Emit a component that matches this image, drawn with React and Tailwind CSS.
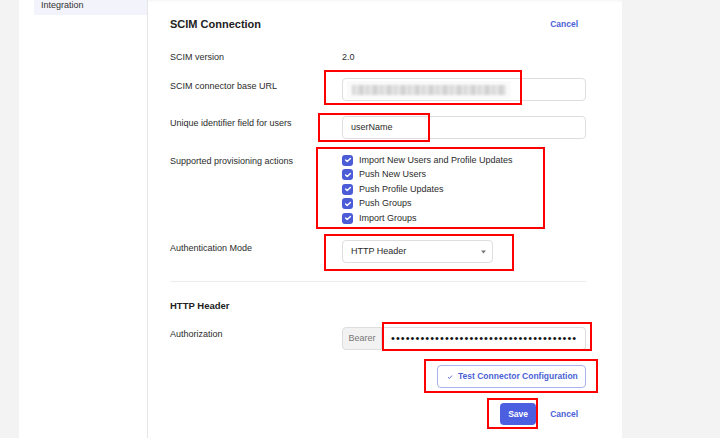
import React from 'react';

const actions = [
  'Import New Users and Profile Updates',
  'Push New Users',
  'Push Profile Updates',
  'Push Groups',
  'Import Groups',
];

const Mark = ({ className }) => (
  <div className={'pointer-events-none absolute border-2 border-[#ff0000] ' + className} />
);

const CheckBox = () => (
  <span className="flex h-[11px] w-[11px] items-center justify-center rounded-[3px] bg-[#4b5cd6]">
    <svg width="8" height="8" viewBox="0 0 8 8">
      <path d="M1.6 4.1 L3.2 5.6 L6.4 2.4" fill="none" stroke="white" strokeWidth="1.4" strokeLinecap="round" strokeLinejoin="round" />
    </svg>
  </span>
);

const App = () => {
  return (
    <div className="flex h-[438px] w-[720px] overflow-hidden bg-[#f3f3f3] font-['Liberation_Sans',Arial,sans-serif] text-[9px] text-[#2b2b2b]">
      <div className="w-[19px]" />

      {/* sidebar */}
      <div className="w-[129px] border-r border-[#e6e6e6] bg-white pl-[15px]">
        <div className="h-[15px] bg-[#f3f3fb] pl-[7px] text-[9px] leading-[10px] text-[#333]">Integration</div>
      </div>

      {/* main */}
      <div className="w-[474px] bg-white pl-[22px] pr-[36px] shadow-[inset_0_3px_3px_-2px_rgba(0,0,0,0.05)]">
        <div className="flex h-[48px] items-center justify-between">
          <h1 className="text-[11px] font-bold text-[#222]">SCIM Connection</h1>
          <button className="px-[8px] text-[8.5px] font-bold text-[#4b5fd6]">Cancel</button>
        </div>

        <div className="grid h-[20px] grid-cols-[172px_1fr] items-center">
          <div>SCIM version</div>
          <div>2.0</div>
        </div>

        <div className="mt-[10px] grid grid-cols-[172px_1fr]">
          <div className="pt-[1px] leading-[14px]">SCIM connector base URL</div>
          <div className="relative">
            <div className="flex h-[23px] items-center rounded-[4px] border border-[#dedede] pl-[4px]">
              <div className="flex h-[18px] w-[164px] items-center bg-[#fafafa] px-[5px]">
                <div className="h-[10px] w-[154px] bg-[repeating-linear-gradient(90deg,#d4d4d4_0px,#e8e8e8_5px,#cdcdcd_9px,#ebebeb_14px)] blur-[1px]" />
              </div>
            </div>
            <Mark className="-left-[18px] -top-[8px] h-[35px] w-[198px]" />
          </div>
        </div>

        <div className="mt-[15px] grid grid-cols-[172px_1fr]">
          <div className="leading-[14px]">Unique identifier field for users</div>
          <div className="relative">
            <div className="flex h-[23px] items-center rounded-[4px] border border-[#dedede] px-[8px]">userName</div>
            <Mark className="-left-[24px] -top-[3px] h-[29px] w-[112px]" />
          </div>
        </div>

        <div className="mt-[14px] grid grid-cols-[172px_1fr]">
          <div className="pt-[1px] leading-[14px]">Supported provisioning actions</div>
          <div className="relative">
            {actions.map((a) => (
              <div key={a} className="flex h-[14.5px] items-center gap-[6px]">
                <CheckBox />
                <span>{a}</span>
              </div>
            ))}
            <Mark className="-left-[26px] -top-[6px] h-[82px] w-[229px]" />
          </div>
        </div>

        <div className="mt-[14.5px] grid grid-cols-[172px_1fr]">
          <div className="pt-[1px] leading-[14px]">Authentication Mode</div>
          <div className="relative">
            <div className="flex h-[23px] w-[151px] items-center justify-between rounded-[4px] border border-[#dedede] pl-[8px] pr-[6px]">
              <span>HTTP Header</span>
              <svg width="5" height="4" viewBox="0 0 5 4">
                <path d="M0 0.5 L5 0.5 L2.5 3.5 Z" fill="#777" />
              </svg>
            </div>
            <Mark className="-left-[18px] -top-[6px] h-[37px] w-[190px]" />
          </div>
        </div>

        <div className="mt-[18px] border-t border-[#ececec]" />

        <h2 className="mt-[17px] text-[9.5px] font-bold leading-[14px] text-[#222]">HTTP Header</h2>

        <div className="mt-[14px] grid grid-cols-[172px_1fr]">
          <div className="leading-[14px]">Authorization</div>
          <div className="relative flex h-[23px]">
            <div className="flex w-[40px] items-center justify-center rounded-l-[4px] border border-[#dedede] bg-[#f2f2f2] text-[#777]">Bearer</div>
            <div className="flex min-w-0 flex-1 items-center overflow-hidden whitespace-nowrap rounded-r-[4px] border border-l-0 border-[#dedede] pl-[9px] text-[11px] tracking-[1.05px] text-[#111]">
              ••••••••••••••••••••••••••••••••••••••
            </div>
            <Mark className="left-[40px] -top-[5px] h-[29px] w-[210px]" />
          </div>
        </div>

        <div className="mt-[15px] flex justify-end">
          <div className="relative">
            <button className="flex h-[23px] w-[149px] items-center gap-[5px] rounded-[4px] border border-[#a9b3ee] pl-[9px] text-[8.5px] font-bold text-[#4b5fd6]">
              <svg width="6" height="6" viewBox="0 0 6 6">
                <path d="M1 3.2 L2.4 4.5 L5 1.6" fill="none" stroke="#4b5fd6" strokeWidth="0.9" />
              </svg>
              Test Connector Configuration
            </button>
            <Mark className="-right-[12px] -top-[6px] h-[34px] w-[174px]" />
          </div>
        </div>

        <div className="mt-[15px] flex items-center justify-end">
          <div className="relative">
            <button className="h-[22px] w-[36px] rounded-[4px] bg-[#4b5fe0] text-[8.5px] font-bold text-white">Save</button>
            <Mark className="-left-[13px] -top-[5px] h-[31px] w-[51px]" />
          </div>
          <button className="ml-[6px] px-[8px] text-[8.5px] font-bold text-[#4b5fd6]">Cancel</button>
        </div>
      </div>

      <div className="flex-1" />
    </div>
  );
};

export default App;
